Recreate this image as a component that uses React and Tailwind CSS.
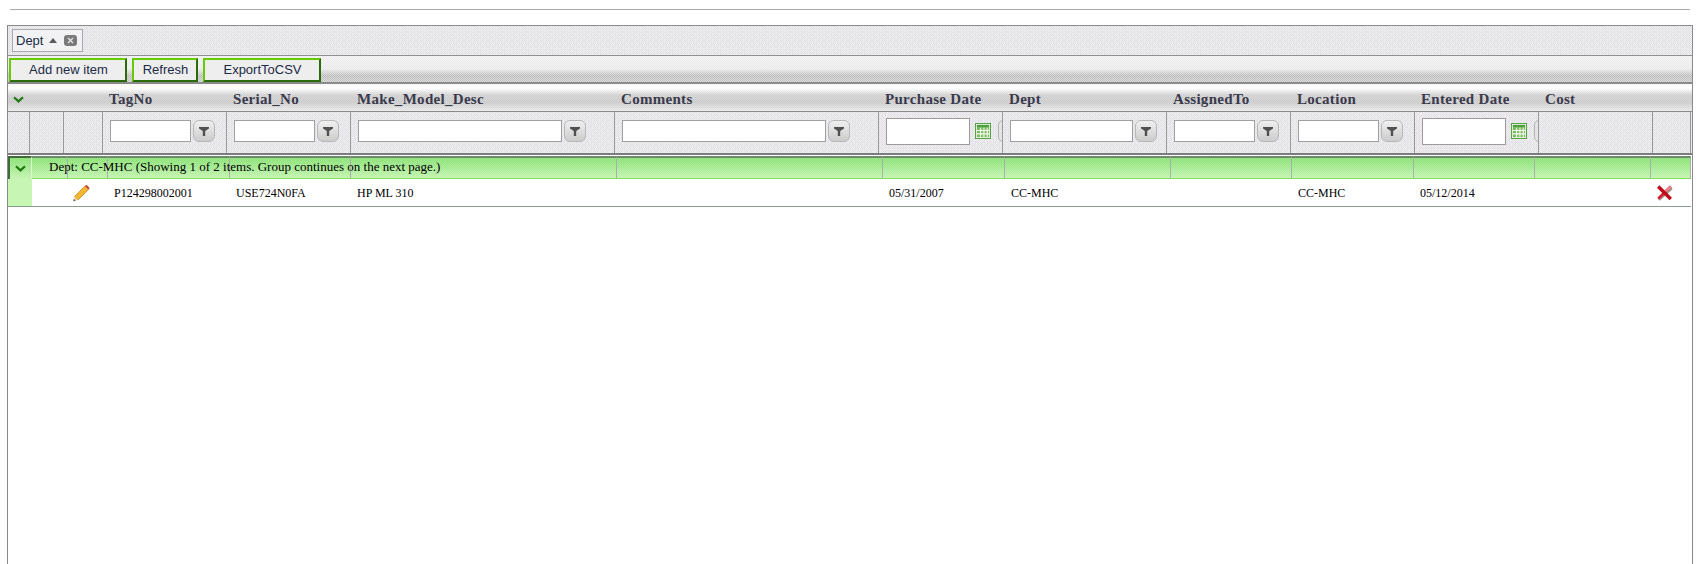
const HEAD_COLS = 'grid grid-cols-[22px_34px_39px_124px_124px_264px_264px_124px_164px_124px_124px_124px_114px_38px]';
const ROW_COLS = 'grid grid-cols-[24px_36px_40px_122px_121px_266px_266px_122px_166px_121px_122px_121px_116px_40px]';

// the original backgrounds are dithered gifs, so a fine checker goes over each fill
const DITHER = '[background-image:repeating-conic-gradient(#ffffff88_0_25%,#0000_0_50%),repeating-conic-gradient(#c8c4cc55_0_25%,#0000_0_50%)] [background-size:2px_2px,3px_3px] bg-[#e6e4e8]';
const COMMAND_BG = '[background-image:repeating-conic-gradient(#ffffff66_0_25%,#0000_0_50%),linear-gradient(#eeeeee_0%,#e8e8e8_50%,#bcbabc_75%,#c6c4c6_100%)] [background-size:2px_2px,100%_100%]';
const HEADER_BG = '[background-image:repeating-conic-gradient(#ffffff44_0_25%,#0000_0_50%),linear-gradient(#f6f6f6_0%,#ffffff_15%,#cccccc_42%,#c8c8c8_68%,#e8e8e8_100%)] [background-size:2px_2px,100%_100%]';
const GROUP_BG = '[background-image:repeating-conic-gradient(#ffffff33_0_25%,#0000_0_50%),linear-gradient(#84e06e,#c0f4ac)] [background-size:2px_2px,100%_100%]';

const headers = [
  '', '', '', 'TagNo', 'Serial_No', 'Make_Model_Desc', 'Comments', 'Purchase Date', 'Dept',
  'AssignedTo', 'Location', 'Entered Date', 'Cost', '',
];

const filters = [
  null, null, null,
  { type: 'text', w: 'w-[81px]' },
  { type: 'text', w: 'w-[81px]' },
  { type: 'text', w: 'w-[204px]' },
  { type: 'text', w: 'w-[204px]' },
  { type: 'date' },
  { type: 'text', w: 'w-[123px]' },
  { type: 'text', w: 'w-[81px]' },
  { type: 'text', w: 'w-[81px]' },
  { type: 'date' },
  null, null,
];

const row = ['', '', '', 'P124298002001', 'USE724N0FA', 'HP ML 310', '', '05/31/2007', 'CC-MHC', '', 'CC-MHC', '05/12/2014', '', ''];

const Chevron = ({ className }) => (
  <svg className={className} width="11" height="7" viewBox="0 0 11 7">
    <path d="M1 1.2 L5.5 5.4 L10 1.2" fill="none" stroke="#1f7a12" strokeWidth="2.2" />
  </svg>
);

const FilterButton = () => (
  <button className="ml-[2px] flex h-[22px] w-[22px] shrink-0 items-center justify-center rounded-[6px] border border-[#b8b8b8] bg-gradient-to-b from-[#f0f0f0] to-[#cccccc]">
    <svg width="10" height="11" viewBox="0 0 10 11">
      <path d="M0 1 H10 V2.5 L6.2 5 V10 H3.8 V5 L0 2.5 Z" fill="#505050" />
    </svg>
  </button>
);

const CalendarIcon = () => (
  <svg className="ml-[5px] shrink-0" width="16" height="16" viewBox="0 0 17 17">
    <rect x="0.5" y="0.5" width="16" height="16" fill="#e8f6e0" stroke="#4f9f3f" />
    <rect x="2" y="2" width="13" height="3" fill="#4f9f3f" />
    <rect x="2" y="5" width="13" height="10" fill="#7dbb62" />
    <path d="M6 5 V15 M9.5 5 V15 M13 5 V15 M2 8 H15 M2 11.5 H15" stroke="#f2fbec" strokeWidth="1.2" />
  </svg>
);

const Pencil = () => (
  <svg width="19" height="18" viewBox="0 0 18 18">
    <path d="M2 12.5 L12.5 2 L16 5.5 L5.5 16 Z" fill="#f2b632" stroke="#c98a1a" strokeWidth="0.8" />
    <path d="M12.5 2 L14 0.8 L17.2 4 L16 5.5 Z" fill="#c8443c" />
    <path d="M2 12.5 L5.5 16 L0.8 17.2 Z" fill="#e8d2a8" />
    <path d="M0.8 17.2 L1.4 15 L3 16.6 Z" fill="#444" />
  </svg>
);

const RedX = () => (
  <svg width="17" height="16" viewBox="0 0 17 16">
    <path d="M3 15 L16 3.5" stroke="#9a9a9a" strokeWidth="2" />
    <path d="M14.8 1.5 L2.2 13.8" stroke="#d8202c" strokeWidth="2.8" />
    <path d="M14.8 1.5 L8.5 7.6" stroke="#ea8088" strokeWidth="2.8" />
    <path d="M2.2 1.5 L14.8 14" stroke="#c00c18" strokeWidth="3.4" />
  </svg>
);

const CommandButton = ({ label, width }) => (
  <button
    className={`${width} h-[24px] border-2 border-t-[#66cc00] border-l-[#66cc00] border-r-[#2a6a08] border-b-[#2a6a08] bg-[#eeeeef] pl-px text-center font-['Liberation_Sans',sans-serif] text-[13px] leading-[20px] text-[#1a2a44]`}
  >
    {label}
  </button>
);

const FilterCell = ({ filter }) => (
  <div className="flex h-full items-center overflow-hidden border-r border-r-[#9a9a9a] pb-[3px] pl-[7px]">
    {filter?.type === 'text' && (
      <>
        <input className={`${filter.w} h-[22px] shrink-0 border border-[#a0a0a0] bg-white`} />
        <FilterButton />
      </>
    )}
    {filter?.type === 'date' && (
      <>
        <input className="h-[27px] w-[84px] shrink-0 border border-[#a09a9a] bg-white" />
        <CalendarIcon />
        <span className="ml-[7px] h-[22px] w-[8px] shrink-0 rounded-l-[5px] border border-[#b4b4b4] bg-[#e4e4e4]" />
      </>
    )}
  </div>
);

export default function App() {
  return (
    <div className="flex h-[564px] flex-col overflow-hidden bg-white font-['Liberation_Serif',serif]">
      <div className="mt-[9px] ml-[10px] h-px w-[1680px] shrink-0 bg-[#a4aca4]" />

      <div className="mt-[15px] ml-[7px] flex w-[1686px] flex-1 flex-col border-x border-t border-[#8a8a8a]">
        {/* group panel */}
        <div className={`h-[30px] shrink-0 border-b border-[#8f8f8f] pt-[3px] pl-[4px] ${DITHER}`}>
          <div className="flex h-[23px] w-[71px] items-center border border-[#a8a8b0] bg-[#f2f2f4] pl-[3px] font-['Liberation_Sans',sans-serif] text-[13px] text-[#1a2a44]">
            Dept
            <svg className="ml-[6px]" width="8" height="5" viewBox="0 0 8 5">
              <path d="M0 5 L4 0 L8 5 Z" fill="#5a5a5a" />
            </svg>
            <span className="ml-[7px] flex h-[11px] w-[13px] items-center justify-center rounded-[3px] bg-[#7a7a7a]">
              <svg width="7" height="7" viewBox="0 0 7 7">
                <path d="M1 1 L6 6 M6 1 L1 6" stroke="#e8e8e8" strokeWidth="1.2" />
              </svg>
            </span>
          </div>
        </div>

        {/* command bar */}
        <div className={`flex h-[28px] shrink-0 gap-[5px] border-b-2 border-[#8a8a8a] pt-[2px] pl-px ${COMMAND_BG}`}>
          <CommandButton label="Add new item" width="w-[118px]" />
          <CommandButton label="Refresh" width="w-[66px]" />
          <CommandButton label="ExportToCSV" width="w-[118px]" />
        </div>

        {/* header row */}
        <div className={`${HEAD_COLS} h-[28px] shrink-0 items-center border-b border-[#8a8a8a] ${HEADER_BG}`}>
          {headers.map((label, i) => (
            <div key={i} className="whitespace-nowrap pt-[4px] pl-[6px] text-[15px] font-bold tracking-[0.3px] text-[#3a3a4c]">
              {i === 0 ? <Chevron className="ml-[-1px]" /> : label}
            </div>
          ))}
        </div>

        {/* filter row */}
        <div className={`${HEAD_COLS} h-[43px] shrink-0 border-b-2 border-[#7c7c7c] ${DITHER}`}>
          {filters.map((filter, i) => (
            <FilterCell key={i} filter={filter} />
          ))}
        </div>

        {/* group header row */}
        <div className={`relative ${ROW_COLS} mt-px h-[23px] w-[1683px] shrink-0`}>
          {row.map((_, i) => (
            <div
              key={i}
              className={
                i === 0
                  ? `flex items-center justify-center border-t-2 border-l-2 border-r border-t-[#3f6a3a] border-l-[#3f6a3a] border-r-[#dff5d4] ${GROUP_BG}`
                  : `border-t-2 border-r border-b border-t-[#6f8a6a] border-r-[#a8b0a8] border-b-[#84e05c] ${GROUP_BG}`
              }
            >
              {i === 0 && <Chevron />}
            </div>
          ))}
          <span className="absolute top-[2px] left-[41px] whitespace-nowrap text-[13px] leading-[17px] text-black">
            Dept: CC-MHC (Showing 1 of 2 items. Group continues on the next page.)
          </span>
        </div>

        {/* data row */}
        <div className={`${ROW_COLS} h-[28px] w-[1683px] shrink-0 items-center border-b border-[#8f9a8f] bg-white`}>
          {row.map((text, i) => {
            if (i === 0) return <div key={i} className="h-full bg-[#c6f5b4]" />;
            if (i === 1) return <div key={i} />;
            if (i === 2) return <div key={i} className="pl-[4px] pt-[1px]"><Pencil /></div>;
            if (i === 13) return <div key={i} className="pl-[5px]"><RedX /></div>;
            return (
              <div key={i} className="whitespace-nowrap pl-[6px] text-[12px] text-black">
                {text}
              </div>
            );
          })}
        </div>
      </div>
    </div>
  );
}
